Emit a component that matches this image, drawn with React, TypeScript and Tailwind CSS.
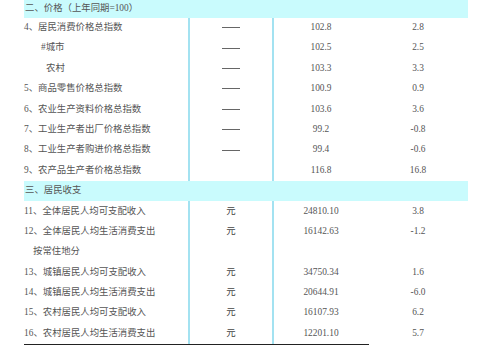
import React from "react";

type Row =
  | { kind: "band"; text: string }
  | { kind: "row"; label: string; indent?: string; unit?: string; v1?: string; v2?: string };

const rows: Row[] = [
  { kind: "row", label: "4、居民消费价格总指数", unit: "——", v1: "102.8", v2: "2.8" },
  { kind: "row", label: "#城市", indent: "pl-[17px]", unit: "——", v1: "102.5", v2: "2.5" },
  { kind: "row", label: "农村", indent: "pl-[22px]", unit: "——", v1: "103.3", v2: "3.3" },
  { kind: "row", label: "5、商品零售价格总指数", unit: "——", v1: "100.9", v2: "0.9" },
  { kind: "row", label: "6、农业生产资料价格总指数", unit: "——", v1: "103.6", v2: "3.6" },
  { kind: "row", label: "7、工业生产者出厂价格总指数", unit: "——", v1: "99.2", v2: "-0.8" },
  { kind: "row", label: "8、工业生产者购进价格总指数", unit: "——", v1: "99.4", v2: "-0.6" },
  { kind: "row", label: "9、农产品生产者价格总指数", v1: "116.8", v2: "16.8" },
  { kind: "band", text: "三、居民收支" },
  { kind: "row", label: "11、全体居民人均可支配收入", unit: "元", v1: "24810.10", v2: "3.8" },
  { kind: "row", label: "12、全体居民人均生活消费支出", unit: "元", v1: "16142.63", v2: "-1.2" },
  { kind: "row", label: "按常住地分", indent: "pl-[9px]" },
  { kind: "row", label: "13、城镇居民人均可支配收入", unit: "元", v1: "34750.34", v2: "1.6" },
  { kind: "row", label: "14、城镇居民人均生活消费支出", unit: "元", v1: "20644.91", v2: "-6.0" },
  { kind: "row", label: "15、农村居民人均可支配收入", unit: "元", v1: "16107.93", v2: "6.2" },
  { kind: "row", label: "16、农村居民人均生活消费支出", unit: "元", v1: "12201.10", v2: "5.7" },
];

const font = { fontFamily: '"Liberation Serif", "Noto Sans CJK SC", serif' };

export default function App() {
  return (
    <div className="w-[499px] h-[345px] bg-white overflow-hidden text-[#555]" style={font}>
      <div className="ml-[24px] w-[444px]">
        <div className="h-[17.5px] bg-[#c9fbfd] flex items-center pl-[1px] text-[9.4px] leading-none">
          二、价格（上年同期=100）
        </div>
        {rows.map((r, i) =>
          r.kind === "band" ? (
            <div key={i} className="h-[20.4px] bg-[#c9fbfd] flex items-center pl-[1px] text-[9.4px] leading-none">
              {r.text}
            </div>
          ) : (
            <div key={i} className="h-[20.4px] grid grid-cols-[164px_84px_96px_100px] text-[9.4px] leading-none">
              <div className={`flex items-center ${r.indent ?? ""}`}>{r.label}</div>
              <div className="flex items-center justify-center border-l-2 border-[#a3e2f1] text-[#444]">
                {r.unit === "——" ? (
                  <span className="block w-[18px] h-px bg-[#666]" />
                ) : (
                  r.unit
                )}
              </div>
              <div className="flex items-center justify-center border-l-2 border-[#a3e2f1]">{r.v1}</div>
              <div className="flex items-center justify-center">{r.v2}</div>
            </div>
          )
        )}
        <div className="w-[345px] border-t border-[#222]" />
      </div>
    </div>
  );
}
